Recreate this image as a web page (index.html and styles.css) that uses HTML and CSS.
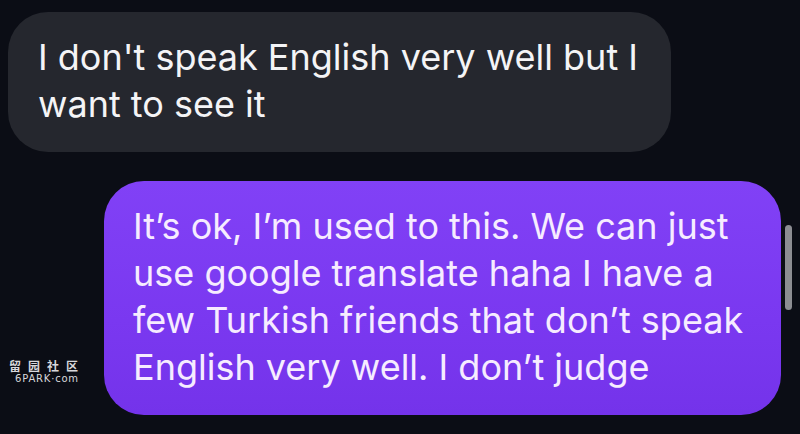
FILE: index.html
```html
<!DOCTYPE html>
<html>
<head>
<meta charset="utf-8">
<link rel="stylesheet" href="styles.css">
</head>
<body>
<div class="chat">
  <div class="bubble incoming">I don't speak English very well but I<br>want to see it</div>
  <div class="bubble outgoing">It’s ok, I’m used to this. We can just<br>use google translate haha I have a<br>few Turkish friends that don’t speak<br>English very well. I don’t judge</div>
</div>
<div class="scrollbar"></div>
<div class="watermark">
  <div class="wm-cn">留园社区</div>
  <div class="wm-en">6PARK·com</div>
</div>
</body>
</html>
```
FILE: styles.css
```css
html, body {
  margin: 0;
  padding: 0;
  background: #0b0d15;
  width: 800px;
  height: 434px;
  overflow: hidden;
}
.chat {
  display: flex;
  flex-direction: column;
  padding: 12px 0 0 8px;
  gap: 29px;
}
.bubble {
  font-family: Inter, "Noto Sans", sans-serif;
  font-size: 36px;
  line-height: 47px;
  box-sizing: border-box;
  padding: 22px 29px 24px;
  white-space: nowrap;
}
.incoming {
  background: #25272e;
  color: #f4f4f6;
  width: 663px;
  border-radius: 40px;
  padding-left: 30px;
}
.outgoing {
  margin-left: 96px;
  width: 677px;
  background: linear-gradient(180deg, #8141f6 0%, #7a38f0 60%, #7433ea 100%);
  color: #f6ecff;
  border-radius: 40px;
}
.scrollbar {
  position: absolute;
  left: 785px;
  top: 225px;
  width: 7px;
  height: 85px;
  border-radius: 4px;
  background: #8c8d92;
}
.watermark {
  position: absolute;
  left: 9px;
  top: 358px;
  color: #d8d8dc;
  font-family: "Noto Sans CJK SC", sans-serif;
  text-align: center;
}
.wm-cn {
  font-size: 12px;
  line-height: 15px;
  letter-spacing: 7px;
  font-weight: bold;
}
.wm-en {
  font-family: "DejaVu Sans", sans-serif;
  font-size: 10px;
  line-height: 12px;
  letter-spacing: 0.8px;
}
```
